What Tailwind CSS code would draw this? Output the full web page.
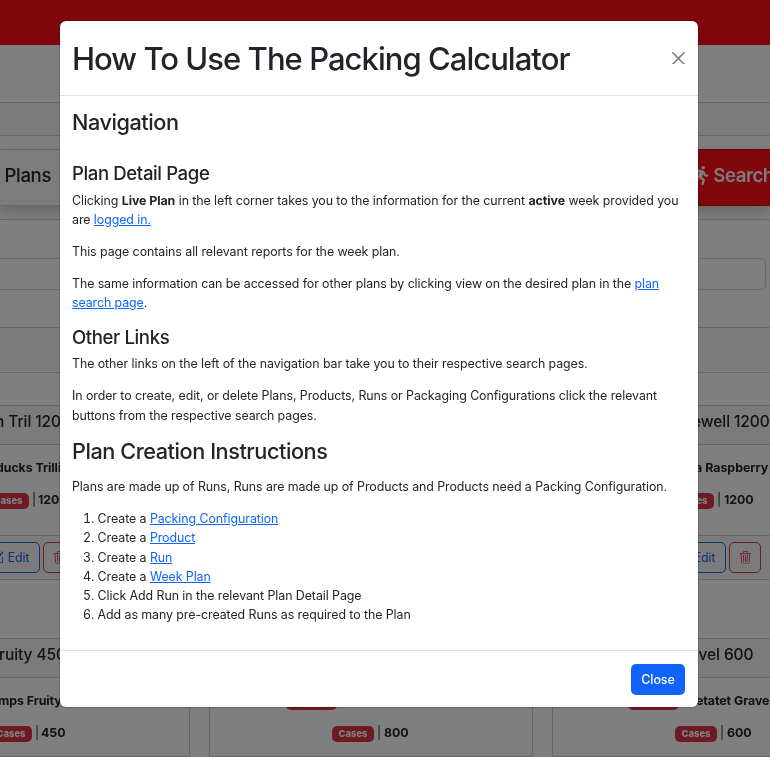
<!DOCTYPE html>
<html lang="en">
<head>
<meta charset="utf-8">
<title>Packing Calculator</title>
<script src="https://cdn.jsdelivr.net/npm/@tailwindcss/browser@4"></script>
</head>
<body class="relative h-[757px] w-[770px] overflow-hidden bg-white font-['Inter','Liberation_Sans',sans-serif] text-[12.4px] leading-[19.2px] tracking-[-0.07px] text-[#212529]">
<svg class="hidden">
  <symbol id="trash" viewBox="0 0 16 16"><path d="M6.5 1h3a.5.5 0 0 1 .5.5v1H6v-1a.5.5 0 0 1 .5-.5M11 2.5v-1A1.5 1.5 0 0 0 9.5 0h-3A1.5 1.5 0 0 0 5 1.5v1H1.5a.5.5 0 0 0 0 1h.538l.853 10.66A2 2 0 0 0 4.885 16h6.23a2 2 0 0 0 1.994-1.84l.853-10.66h.538a.5.5 0 0 0 0-1zm1.958 1-.846 10.58a1 1 0 0 1-.997.92h-6.23a1 1 0 0 1-.997-.92L3.042 3.5zm-7.487 1a.5.5 0 0 1 .528.47l.5 8.5a.5.5 0 0 1-.998.06L5 5.03a.5.5 0 0 1 .47-.53Zm5.058 0a.5.5 0 0 1 .47.53l-.5 8.5a.5.5 0 1 1-.998-.06l.5-8.5a.5.5 0 0 1 .528-.47M8 4.5a.5.5 0 0 1 .5.5v8.5a.5.5 0 0 1-1 0V5a.5.5 0 0 1 .5-.5"/></symbol>
  <symbol id="pencil" viewBox="0 0 16 16"><path d="M15.502 1.94a.5.5 0 0 1 0 .706L14.459 3.69l-2-2L13.502.646a.5.5 0 0 1 .707 0l1.293 1.293zm-1.75 2.456-2-2L4.939 9.21a.5.5 0 0 0-.121.196l-.805 2.414a.25.25 0 0 0 .316.316l2.414-.805a.5.5 0 0 0 .196-.12l6.813-6.814z"/><path d="M1 13.5A1.5 1.5 0 0 0 2.5 15h11a1.5 1.5 0 0 0 1.5-1.5v-6a.5.5 0 0 0-1 0v6a.5.5 0 0 1-.5.5h-11a.5.5 0 0 1-.5-.5v-11a.5.5 0 0 1 .5-.5H9a.5.5 0 0 0 0-1H2.5A1.5 1.5 0 0 0 1 2.5z"/></symbol>
</svg>

<!-- Page -->
<div class="flex w-[770px] flex-col will-change-transform">
  <div class="h-[45px] bg-[#ff0d17]"></div>
  <div class="h-[57px]"></div>
  <div class="h-[34px] border-y border-[#ccc] bg-[#f7f7f7]"></div>
  <div class="mt-[13px] flex h-[57px] justify-between">
    <div class="flex w-[120px] items-center border-y border-[#ccc] bg-[#f8f8f8] pb-[3px] pl-[4.5px] text-[18.6px] font-medium tracking-[-0.36px] shadow-[0_6px_13px_rgba(0,0,0,0.2)]">Plans</div>
    <div class="flex w-[120px] items-center gap-[4px] border-y border-[#d00a12] bg-[#ff0d17] pb-[3px] pl-[42.5px] text-[18.6px] font-semibold tracking-[-0.45px] text-[#f8f8f8] shadow-[0_6px_13px_rgba(0,0,0,0.2)]">
      <svg class="h-[19.2px] w-[16.8px] shrink-0" viewBox="0 0 448 512" fill="currentColor"><path d="M320 48a48 48 0 1 0 -96 0 48 48 0 1 0 96 0zM125.7 175.5c9.9-9.9 23.4-15.5 37.5-15.5c1.9 0 3.8 .1 5.6 .3L137.6 254c-9.3 28 1.7 58.8 26.8 74.5l86.2 53.9-25.4 88.8c-4.9 17 5 34.7 22 39.6s34.7-5 39.6-22l28.7-100.4c5.9-20.6-2.6-42.6-20.7-53.9L238 299l30.9-82.4 5.1 12.3C289 264.7 323.9 288 362.7 288H384c17.7 0 32-14.3 32-32s-14.3-32-32-32H362.7c-12.9 0-24.6-7.8-29.5-19.7l-6.3-15c-14.6-35.1-44.1-61.9-80.5-73.1l-48.7-15c-11.1-3.4-22.7-5.2-34.4-5.2c-31 0-60.8 12.3-82.7 34.3L57.4 153.4c-12.5 12.5-12.5 32.8 0 45.3s32.8 12.5 45.3 0l23.1-23.1zM91.2 352H32c-17.7 0-32 14.3-32 32s14.3 32 32 32h69.6c19 0 36.2-11.2 43.9-28.5L157 361.6l-9.5-6c-17.5-10.9-30.5-26.8-37.9-44.9L91.2 352z"/></svg>
      <span>Search</span>
    </div>
  </div>
  <div class="mt-[13px] h-[154px] border-y border-[#ccc]">
    <div class="mt-[38px] mr-1 -ml-3 h-8 rounded-[5px] border border-[#ced4da]"></div>
    <div class="mt-[37px] h-[44px] border-t border-[#ccc] bg-[#f7f7f7]"></div>
  </div>

  <!-- Card grid, first row -->
  <div class="mt-8 -ml-[134px] flex w-[1010px] gap-[19px]">
    <div class="h-[175px] w-[324px] shrink-0 border border-[#ccc] whitespace-nowrap">
      <div class="flex h-[39px] items-center border-b border-[#ccc] bg-[#f7f7f7] pb-[6px] pl-[128px] text-[15.5px] font-medium tracking-[-0.08px]">n Tril 1200</div>
      <div class="h-[91px] border-b border-[#ccc] pt-[13px] font-bold">
        <div class="pl-[129px]">ducks Trillion</div>
        <div class="mt-[13px] flex items-center pl-[120px]"><span class="mt-0.5 flex h-4 w-[42px] items-center justify-center rounded-[5px] bg-[#dc3545] text-[9.4px] font-extrabold tracking-normal text-white">Cases</span><span class="ml-[3px] font-normal">|</span><span class="ml-[2px]">1200</span></div>
      </div>
      <div class="flex gap-[3px] bg-[#f7f7f7] pt-[6px] pb-[5px] pl-[109px]">
        <div class="flex h-[31px] w-[64px] items-center justify-end gap-[4px] rounded-[5px] border border-[#1064fa] pr-[9.5px] text-[#1064fa]"><svg class="size-[12.8px]" fill="currentColor"><use href="#pencil"/></svg>Edit</div>
        <div class="flex h-[31px] w-8 items-center justify-center rounded-[5px] border border-[#dc3545] text-[#dc3545]"><svg class="size-[12.8px]" fill="currentColor"><use href="#trash"/></svg></div>
      </div>
    </div>
    <div class="h-[175px] w-[324px] shrink-0 border border-[#ccc]"></div>
    <div class="h-[175px] w-[324px] shrink-0 border border-[#ccc] whitespace-nowrap">
      <div class="flex h-[39px] items-center border-b border-[#ccc] bg-[#f7f7f7] pb-[6px] pl-[139px] text-[15.5px] font-medium tracking-[-0.08px]">ewell 1200</div>
      <div class="h-[91px] border-b border-[#ccc] pt-[13px] font-bold">
        <div class="pl-[142px] tracking-normal">a Raspberry</div>
        <div class="mt-[13px] flex items-center pl-[119px]"><span class="mt-0.5 flex h-4 w-[42px] items-center justify-center rounded-[5px] bg-[#dc3545] text-[9.4px] font-extrabold tracking-normal text-white">Cases</span><span class="ml-[3px] font-normal">|</span><span class="ml-[3px]">1200</span></div>
      </div>
      <div class="flex gap-[3px] bg-[#f7f7f7] pt-[6px] pb-[5px] pl-[109px]">
        <div class="flex h-[31px] w-[64px] items-center justify-end gap-[4px] rounded-[5px] border border-[#1064fa] pr-[9.5px] text-[#1064fa]"><svg class="size-[12.8px]" fill="currentColor"><use href="#pencil"/></svg>Edit</div>
        <div class="flex h-[31px] w-8 items-center justify-center rounded-[5px] border border-[#dc3545] text-[#dc3545]"><svg class="size-[12.8px]" fill="currentColor"><use href="#trash"/></svg></div>
      </div>
    </div>
  </div>

  <!-- Card grid, second row -->
  <div class="mt-[58px] -ml-[134px] flex w-[1010px] gap-[19px]">
    <div class="h-[119px] w-[324px] shrink-0 border border-[#ccc] whitespace-nowrap">
      <div class="flex h-[39px] items-center border-b border-[#ccc] bg-[#f7f7f7] pb-[6px] pl-[132px] text-[15.5px] font-medium tracking-[-0.08px]">ruity 450</div>
      <div class="pt-[13px] font-bold">
        <div class="pl-[131px]">mps Fruity</div>
        <div class="mt-[13px] flex items-center pl-[123px]"><span class="mt-0.5 flex h-4 w-[42px] items-center justify-center rounded-[5px] bg-[#dc3545] text-[9.4px] font-extrabold tracking-normal text-white">Cases</span><span class="ml-[3px] font-normal">|</span><span class="ml-[2px]">450</span></div>
      </div>
    </div>
    <div class="h-[119px] w-[324px] shrink-0 border border-[#ccc] whitespace-nowrap">
      <div class="h-[39px] border-b border-[#ccc] bg-[#f7f7f7]"></div>
      <div class="pt-[13px] font-bold">
        <div class="flex h-[19.2px] items-end pl-[76px]"><span class="h-4 w-[51px] rounded-[5px] bg-[#dc3545]"></span></div>
        <div class="mt-[13px] flex items-center pl-[122px]"><span class="mt-0.5 flex h-4 w-[42px] items-center justify-center rounded-[5px] bg-[#dc3545] text-[9.4px] font-extrabold tracking-normal text-white">Cases</span><span class="ml-[3px] font-normal">|</span><span class="ml-[3px]">800</span></div>
      </div>
    </div>
    <div class="h-[119px] w-[324px] shrink-0 border border-[#ccc] whitespace-nowrap">
      <div class="flex h-[39px] items-center border-b border-[#ccc] bg-[#f7f7f7] pb-[6px] pl-[137px] text-[15.5px] font-medium tracking-[-0.08px]">avel 600</div>
      <div class="pt-[13px] font-bold">
        <div class="flex h-[19.2px] items-center pl-[75px]"><span class="mt-[3px] h-4 w-[51px] rounded-[5px] bg-[#dc3545]"></span><span class="ml-[17px]">etatet Gravel</span></div>
        <div class="mt-[13px] flex items-center pl-[122px]"><span class="mt-0.5 flex h-4 w-[42px] items-center justify-center rounded-[5px] bg-[#dc3545] text-[9.4px] font-extrabold tracking-normal text-white">Cases</span><span class="ml-[3px] font-normal">|</span><span class="ml-[3px]">600</span></div>
      </div>
    </div>
  </div>
</div>

<!-- Dialog over dimmed page -->
<div class="absolute inset-0 bg-black/50 pt-[21px] pl-[60px] will-change-transform">
  <div class="flex h-[686px] w-[638px] flex-col rounded-[6px] bg-white whitespace-nowrap shadow-[0_0_0_1px_rgba(0,0,0,0.175)]">
    <div class="flex h-[75px] items-center justify-between border-b border-[#dee2e6] pr-[13px] pl-3">
      <h1 class="pt-0.5 text-[31px] leading-[38.4px] font-medium tracking-[-0.96px]">How To Use The Packing Calculator</h1>
      <svg class="size-[12.8px] opacity-50" viewBox="0 0 16 16"><path d="M.293.293a1 1 0 0 1 1.414 0L8 6.586 14.293.293a1 1 0 1 1 1.414 1.414L9.414 8l6.293 6.293a1 1 0 0 1-1.414 1.414L8 9.414l-6.293 6.293a1 1 0 0 1-1.414-1.414L6.586 8 .293 1.707a1 1 0 0 1 0-1.414z"/></svg>
    </div>
    <div class="h-[554px] px-3 pt-[13.3px]">
      <h3 class="text-[21.7px] leading-[26.9px] font-medium tracking-[-0.45px]">Navigation</h3>
      <h4 class="mt-[25.6px] text-[18.6px] leading-[23px] font-medium tracking-[-0.4px]">Plan Detail Page</h4>
      <p class="mt-[5.9px]">Clicking <b>Live Plan</b> in the left corner takes you to the information for the current <b>active</b> week provided you<br>are <a class="text-[#1064fa] underline">logged in.</a></p>
      <p class="mt-[12.8px]">This page contains all relevant reports for the week plan.</p>
      <p class="mt-[12.8px] tracking-[-0.09px]">The same information can be accessed for other plans by clicking view on the desired plan in the <a class="text-[#1064fa] underline">plan<br>search page</a>.</p>
      <h4 class="mt-[13.4px] text-[18.6px] leading-[23px] font-medium tracking-[-0.4px]">Other Links</h4>
      <p class="mt-[5.8px]">The other links on the left of the navigation bar take you to their respective search pages.</p>
      <p class="mt-[12.8px]">In order to create, edit, or delete Plans, Products, Runs or Packaging Configurations click the relevant<br>buttons from the respective search pages.</p>
      <h3 class="mt-[12.8px] text-[21.7px] leading-[26.9px] font-medium tracking-[-0.45px]">Plan Creation Instructions</h3>
      <p class="mt-[12.8px]">Plans are made up of Runs, Runs are made up of Products and Products need a Packing Configuration.</p>
      <ol class="mt-[12.6px] list-decimal pl-[25.6px]">
        <li>Create a <a class="text-[#1064fa] underline">Packing Configuration</a></li>
        <li>Create a <a class="text-[#1064fa] underline">Product</a></li>
        <li>Create a <a class="text-[#1064fa] underline">Run</a></li>
        <li>Create a <a class="text-[#1064fa] underline">Week Plan</a></li>
        <li>Click Add Run in the relevant Plan Detail Page</li>
        <li>Add as many pre-created Runs as required to the Plan</li>
      </ol>
    </div>
    <div class="flex h-[57px] items-center justify-end border-t border-[#dee2e6] pr-[13px]">
      <button class="h-[31px] w-[54px] rounded-[5px] bg-[#1064fa] pt-px font-medium text-white">Close</button>
    </div>
  </div>
</div>
</body>
</html>
